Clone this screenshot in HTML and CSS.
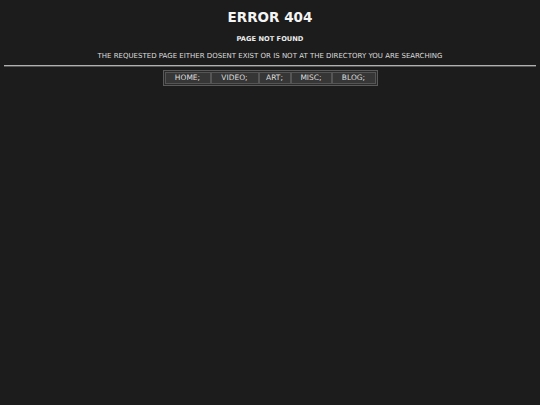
FILE: index.html
```html
<!DOCTYPE html>
<html>
<head>
<meta charset="utf-8">
<link rel="stylesheet" href="styles.css">
</head>
<body>
<div class="page">
  <h1 class="title">ERROR 404</h1>
  <p class="sub">PAGE NOT FOUND</p>
  <p class="desc">THE REQUESTED PAGE EITHER DOSENT EXIST OR IS NOT AT THE DIRECTORY YOU ARE SEARCHING</p>
  <div class="rule"></div>
  <nav class="menu">
    <a class="item w-home">HOME;</a>
    <a class="item w-video">VIDEO;</a>
    <a class="item w-art">ART;</a>
    <a class="item w-misc">MISC;</a>
    <a class="item w-blog">BLOG;</a>
  </nav>
</div>
</body>
</html>
```
FILE: styles.css
```css
html, body {
  margin: 0;
  padding: 0;
  background: #1c1c1c;
  height: 100%;
}
body {
  font-family: "DejaVu Sans", Verdana, sans-serif;
  color: #ececec;
}
.page {
  display: flex;
  flex-direction: column;
  align-items: center;
  padding: 0 4px;
}
.title {
  margin: 9px 0 0;
  font-size: 13.5px;
  line-height: 16px;
  font-weight: bold;
  color: #f4f4f4;
}
.sub {
  margin: 9px 0 0;
  font-size: 6.7px;
  line-height: 10px;
  font-weight: bold;
}
.desc {
  margin: 8px 0 0;
  font-size: 7px;
  line-height: 9px;
  color: #dcdcdc;
}
.rule {
  align-self: stretch;
  margin-top: 4px;
  height: 1px;
  background: #b0b0b0;
  border-bottom: 1px solid #555;
}
.menu {
  margin-top: 3px;
  display: flex;
  border: 1px solid #5a5a5a;
  background: #2a2a2a;
  padding: 1px;
}
.item {
  box-sizing: border-box;
  height: 12px;
  border: 1px solid #555;
  background: #363636;
  color: #dedede;
  font-size: 7.5px;
  line-height: 10px;
  text-align: center;
}
.w-home { width: 46px; }
.w-video { width: 48px; }
.w-art { width: 32px; }
.w-misc { width: 41px; }
.w-blog { width: 44px; }
```
